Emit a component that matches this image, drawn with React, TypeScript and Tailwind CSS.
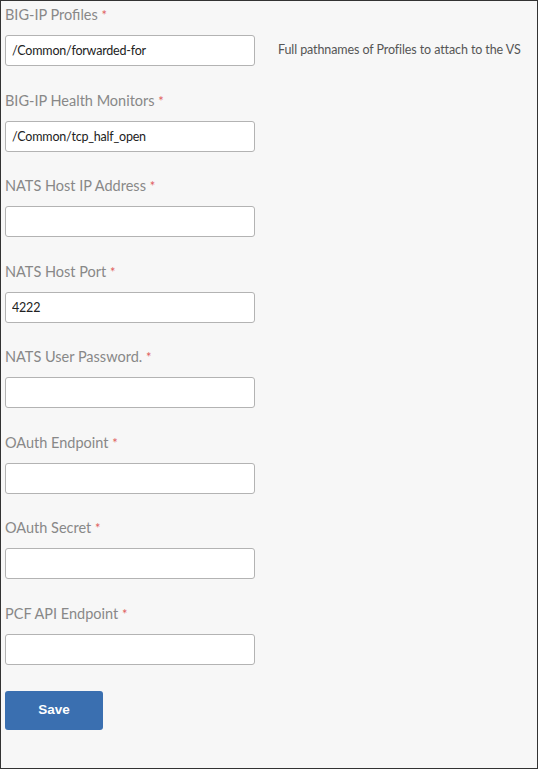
import React from "react";

const fields: { label: string; value: string; help?: string }[] = [
  { label: "BIG-IP Profiles", value: "/Common/forwarded-for", help: "Full pathnames of Profiles to attach to the VS" },
  { label: "BIG-IP Health Monitors", value: "/Common/tcp_half_open" },
  { label: "NATS Host IP Address", value: "" },
  { label: "NATS Host Port", value: "4222" },
  { label: "NATS User Password.", value: "" },
  { label: "OAuth Endpoint", value: "" },
  { label: "OAuth Secret", value: "" },
  { label: "PCF API Endpoint", value: "" },
];

export default function App() {
  return (
    <div
      className="w-[538px] h-[769px] border border-[#333] bg-[#f7f7f7] pl-[4px] pt-[4px] box-border"
      style={{ fontFamily: "Lato, 'Open Sans', sans-serif" }}
    >
      <div className="flex flex-col">
        {fields.map((f, i) => (
          <div key={i} className={i === 0 ? "" : "mt-[24.5px]"}>
            <div className="h-[20px] leading-[20px] text-[14.5px] text-[#888]">
              {f.label} <span className="text-[#e06060] text-[13px]">*</span>
            </div>
            <div className="mt-[10px] flex items-center">
              <input
                readOnly
                value={f.value}
                className="w-[250px] h-[31px] box-border border border-[#b3b3b3] rounded-[3px] bg-white px-[6px] text-[12.5px] text-[#222] outline-none"
                style={{ fontFamily: "Lato, 'Open Sans', sans-serif", letterSpacing: "-0.2px" }}
              />
              {f.help && (
                <span className="ml-[23px] text-[12.5px] text-[#555]" style={{ letterSpacing: "-0.1px" }}>
                  {f.help}
                </span>
              )}
            </div>
          </div>
        ))}
        <button
          className="mt-[26px] w-[98px] h-[39px] rounded-[3px] bg-[#3a6fb0] text-white text-[13.5px] font-bold"
          style={{ fontFamily: "'Liberation Sans', Arial, sans-serif" }}
        >
          Save
        </button>
      </div>
    </div>
  );
}
